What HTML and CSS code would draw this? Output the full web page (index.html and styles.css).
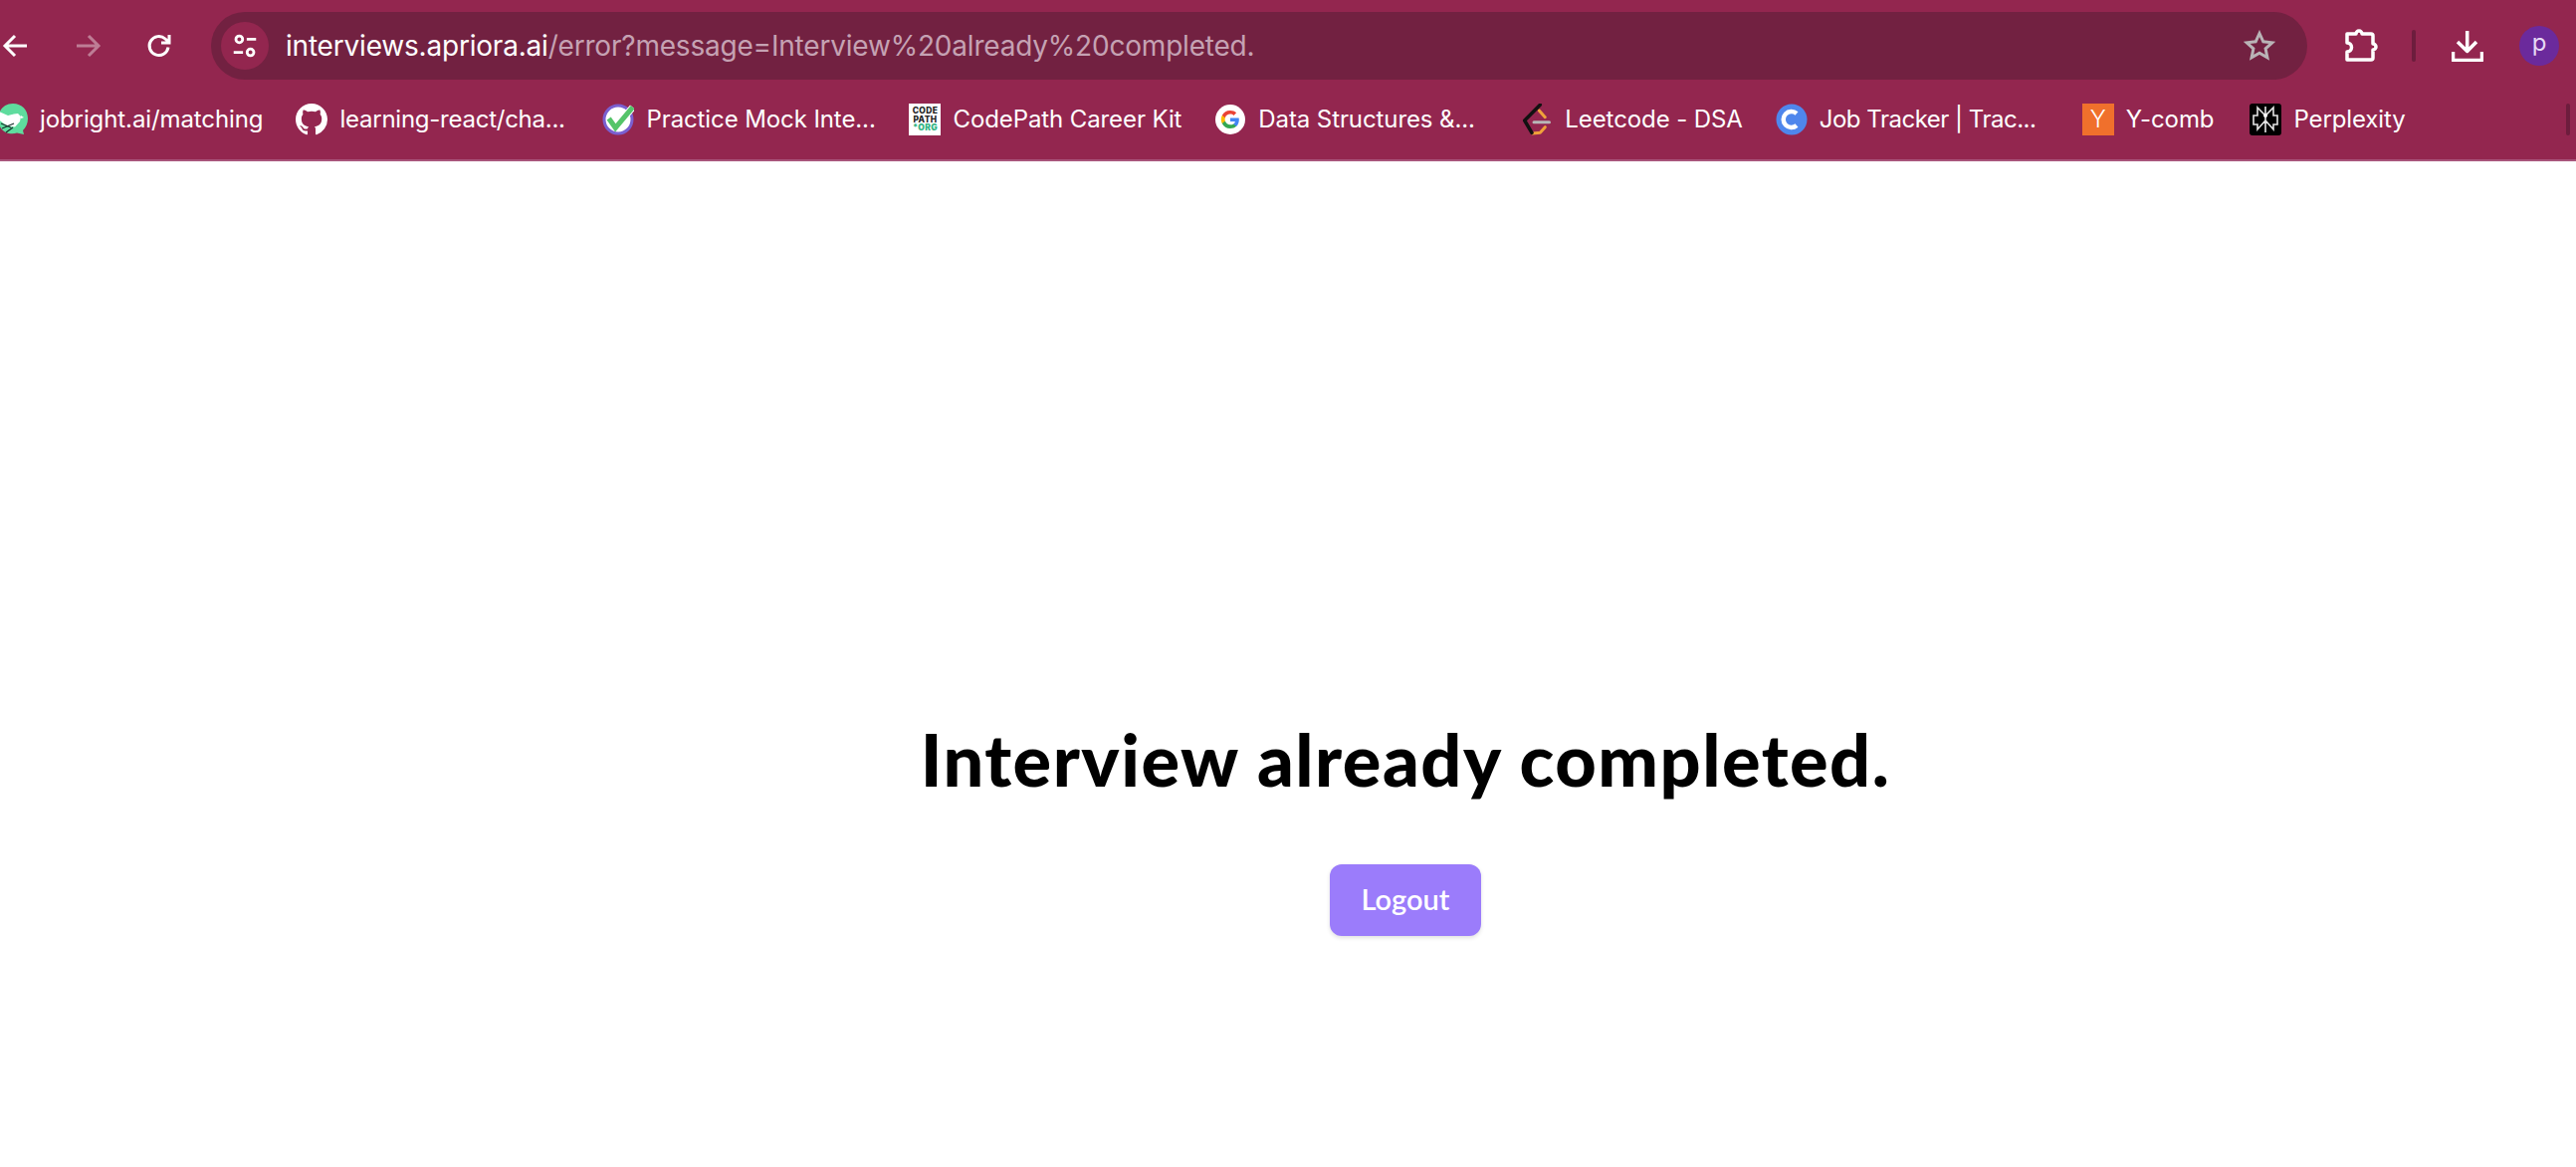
FILE: index.html

```html
<!DOCTYPE html>
<html lang="en">
<head>
  <meta charset="UTF-8">
  <title>Interview already completed.</title>
  <link rel="stylesheet" href="styles.css">
</head>
<body>

  <header class="chrome">
    <div class="toolbar">
      <svg class="nav-icon back" viewBox="0 0 32 32"><path d="M27 16H6M15 6L5 16l10 10"/></svg>
      <svg class="nav-icon forward" viewBox="0 0 32 32"><path d="M5 16h21M17 6l10 10-10 10"/></svg>
      <svg class="nav-icon reload" viewBox="0 0 32 32"><path d="M25 17.500a9.500 9.500 0 1 1-3-8.500L26 12.500M26 5v8h-8"/></svg>

      <div class="omnibox">
        <span class="site-chip">
          <svg viewBox="0 0 32 32"><circle cx="10" cy="9" r="3.600"/><path d="M18 9h10M4 23h10"/><circle cx="22" cy="23" r="3.600"/></svg>
        </span>
        <span class="url"><span class="url-host">interviews.apriora.ai</span>/error?message=Interview%20already%20completed.</span>
        <svg class="star" viewBox="0 0 32 32"><path d="M16 3.500l3.800 8.300 9 1-6.700 6.100 1.800 8.900-7.900-4.500-7.900 4.500 1.800-8.900-6.700-6.100 9-1z"/></svg>
      </div>

      <svg class="tool-icon puzzle" viewBox="0 0 34 34"><path d="M3 5h9a3 3 0 0 1 6 0h9a2 2 0 0 1 2 2v8a3 3 0 0 1 0 6v8a2 2 0 0 1-2 2H3v-8a4.500 4.500 0 0 0 0-9z"/></svg>
      <span class="divider"></span>
      <svg class="tool-icon download" viewBox="0 0 32 32"><path d="M15.700 1v20M6 12l9.700 9.500L25 12M1.500 22v8.500h29V22"/></svg>
      <span class="avatar">p</span>
    </div>

    <nav class="bookmarks">
      <a class="bookmark">
        <svg class="favicon" viewBox="0 0 32 32">
          <path d="M17 0c9 0 15 6.500 15 15 0 5-2 9-5 12l1 4-7-1.500C14 32 3 29 2 16 2 7 8 0 17 0z" fill="#5fdc9e"/>
          <path d="M3 8l9 4 6-1.500 4-.500 3 3-1 5-5 5.500-8-1-8-6z" fill="#fff"/>
          <path d="M25 12l3 2-3 1z" fill="#fff"/>
          <path d="M5 20l10 4M6 25l12-5M10 29l7-5" fill="none" stroke="#17302a" stroke-width="1.300"/>
        </svg>
        <span class="label">jobright.ai/matching</span>
      </a>
      <a class="bookmark elided">
        <svg class="favicon" viewBox="0 0 16 16"><path fill="#fff" d="M8 0C3.580 0 0 3.580 0 8c0 3.540 2.290 6.530 5.470 7.590.4.070.55-.17.55-.38 0-.19-.01-.82-.01-1.490-2.010.37-2.530-.49-2.690-.94-.09-.23-.48-.94-.82-1.130-.28-.15-.68-.52-.01-.53.630-.01 1.080.58 1.230.82.720 1.210 1.870.870 2.330.660.070-.520.280-.870.510-1.070-1.780-.2-3.640-.89-3.640-3.950 0-.870.310-1.590.820-2.150-.080-.2-.360-1.020.080-2.120 0 0 .670-.210 2.200.820a7.400 7.400 0 0 1 4 0c1.530-1.040 2.200-.820 2.200-.820.440 1.100.160 1.920.080 2.120.510.560.820 1.270.820 2.150 0 3.070-1.870 3.750-3.650 3.950.290.250.540.730.540 1.480 0 1.070-.010 1.930-.010 2.200 0 .210.150.460.550.380A8.010 8.010 0 0 0 16 8c0-4.420-3.580-8-8-8z"/></svg>
        <span class="label tight">learning-react/cha...</span>
      </a>
      <a class="bookmark elided">
        <svg class="favicon" viewBox="0 0 32 32">
          <circle cx="16" cy="16" r="14" fill="#fff" stroke="#7a5fd0" stroke-width="3"/>
          <path d="M22 14L30.700 3.700" fill="none" stroke="#fff" stroke-width="7"/>
          <path d="M6.700 15l6.600 9.300L30.700 3.700" fill="none" stroke="#55c46a" stroke-width="5"/>
        </svg>
        <span class="label">Practice Mock Inte...</span>
      </a>
      <a class="bookmark">
        <span class="favicon codepath">CODE<br>PATH<br><b>*ORG</b></span>
        <span class="label">CodePath Career Kit</span>
      </a>
      <a class="bookmark elided">
        <svg class="favicon" viewBox="0 0 32 32">
          <circle cx="16" cy="16" r="15" fill="#fff"/>
          <path d="M24.800 16.300c0-.700-.060-1.300-.170-1.900H16v3.600h4.900a4.200 4.200 0 0 1-1.800 2.750v2.300h2.950c1.720-1.590 2.750-3.930 2.750-6.750z" fill="#4285f4"/>
          <path d="M16 25c2.470 0 4.540-.820 6.050-2.220l-2.950-2.300c-.820.550-1.860.880-3.100.880-2.380 0-4.400-1.610-5.120-3.770H7.830v2.370A9 9 0 0 0 16 25z" fill="#34a853"/>
          <path d="M10.880 17.590a5.400 5.400 0 0 1 0-3.420V11.800H7.830a9 9 0 0 0 0 8.160z" fill="#fbbc05"/>
          <path d="M16 10.580c1.340 0 2.550.460 3.500 1.370l2.620-2.620C20.540 7.860 18.470 7 16 7a9 9 0 0 0-8.170 4.800l3.050 2.370c.720-2.160 2.740-3.590 5.120-3.590z" fill="#ea4335"/>
        </svg>
        <span class="label">Data Structures &amp;...</span>
      </a>
      <a class="bookmark">
        <svg class="favicon" viewBox="0 0 32 32" fill="none" stroke-linecap="round" stroke-linejoin="round">
          <path d="M18.300 7l6 6.700M11.700 30l7.600-.700 5-5.600" stroke="#f0a23a" stroke-width="3"/>
          <path d="M19.300 1.300L3.700 17 11 29.300" stroke="#111" stroke-width="3.500"/>
          <path d="M13 18.700h15.500" stroke="#b8b8b8" stroke-width="3"/>
        </svg>
        <span class="label">Leetcode - DSA</span>
      </a>
      <a class="bookmark elided">
        <svg class="favicon" viewBox="0 0 32 32"><circle cx="16" cy="16" r="15.500" fill="#4f86ec"/><path d="M21 10a8 8 0 1 0 0 12" fill="none" stroke="#fff" stroke-width="4.500"/></svg>
        <span class="label tighter">Job Tracker | Trac...</span>
      </a>
      <a class="bookmark y-comb">
        <span class="favicon ycomb">Y</span>
        <span class="label">Y-comb</span>
      </a>
      <a class="bookmark">
        <svg class="favicon" viewBox="0 0 32 32">
          <rect width="32" height="32" rx="3" fill="#000"/>
          <path d="M16 3v26M8 4l8 8 8-8v8h4v9h-4v5l-8-9-8 9v-5H4v-9h4z" fill="none" stroke="#e4e4e4" stroke-width="1.600"/>
          <circle cx="16" cy="12" r="2" fill="#fff"/>
        </svg>
        <span class="label">Perplexity</span>
      </a>
      <span class="bookmark-end"></span>
    </nav>
  </header>

  <main class="error-page">
    <h1>Interview already completed.</h1>
    <button class="logout">Logout</button>
  </main>

</body>
</html>
```

FILE: styles.css

```css
html, body { height: 100%; }
body { margin: 0; background: #fff; font-family: "Inter", "Liberation Sans", sans-serif; display: flex; flex-direction: column; overflow: hidden; }

.chrome { background: #93264f; height: 160px; border-bottom: 2px solid #a9557b; flex: none; }
.toolbar { display: flex; align-items: center; height: 68px; padding: 12px 0 0 0; }
.nav-icon { width: 32px; height: 32px; fill: none; stroke: #fff; stroke-width: 3; flex: none; }
.back { margin-right: 40px; }
.forward { margin-right: 40px; opacity: 0.4; }
.reload { margin-right: 36px; }

.omnibox { width: 2106px; height: 68px; border-radius: 34px; background: #722141; display: flex; align-items: center; padding: 0 32px 0 10px; box-sizing: border-box; flex: none; }
.site-chip { width: 48px; height: 48px; border-radius: 50%; background: #93264f; display: flex; align-items: center; justify-content: center; margin-right: 17px; }
.site-chip svg { width: 30px; height: 30px; fill: none; stroke: #fff; stroke-width: 3; }
.url { flex: 1; font-size: 28px; color: #c5a2b3; white-space: nowrap; letter-spacing: -0.2px; }
.url-host { color: #fff; }
.star { width: 32px; height: 32px; fill: none; stroke: #b9b3b6; stroke-width: 3; }

.tool-icon { fill: none; stroke: #fff; stroke-width: 3.500; stroke-linejoin: round; flex: none; }
.puzzle { width: 34px; height: 34px; margin-left: 37px; }
.divider { width: 4px; height: 32px; border-radius: 2px; background: #6d1d3d; margin-left: 34px; flex: none; }
.download { width: 32px; height: 32px; margin-left: 36px; }
.avatar { width: 40px; height: 40px; border-radius: 50%; background: #6b2a9c; color: #e6d8f5; font-size: 24px; line-height: 34px; text-align: center; margin-left: 36px; flex: none; }

.bookmarks { display: flex; align-items: center; height: 32px; margin: 24px 0 0 -4px; gap: 33px; }
.bookmark { display: flex; align-items: center; gap: 12px; color: #fff; font-size: 24px; white-space: nowrap; letter-spacing: -0.1px; flex: none; }
.bookmark.elided { width: 275px; }
.y-comb { margin-right: 3px; }
.label { margin-top: -2px; }
.tight { letter-spacing: -0.25px; }
.tighter { letter-spacing: -0.5px; }
.favicon { width: 32px; height: 32px; flex: none; display: block; }
.codepath { background: #fff; color: #222; font-size: 8.500px; line-height: 8.500px; font-weight: 800; text-align: center; letter-spacing: 0.3px; padding-top: 3px; box-sizing: border-box; }
.codepath b { color: #35b585; }
.ycomb { background: #f0702c; color: #fff; font-size: 24px; line-height: 32px; text-align: center; font-weight: 300; }
.bookmark-end { width: 4px; height: 32px; border-radius: 2px; background: #6d1d3d; margin-left: auto; margin-right: 6px; flex: none; }

.error-page { flex: 1; display: flex; flex-direction: column; align-items: center; padding: 555px 0 0 236px; }
h1 { margin: 0; font-family: "Lato", "Noto Sans", sans-serif; font-weight: 900; font-size: 72px; line-height: 90px; color: #000; letter-spacing: 1.500px; }
.logout { margin-top: 61px; width: 152px; height: 72px; border: 0; border-radius: 12px; background: #9b7cfb; color: #fff; font-family: "Lato", "Noto Sans", sans-serif; font-size: 29px; font-weight: 600; padding: 0 0 3px; box-shadow: 0 2px 4px rgba(0, 0, 0, 0.12); }
```
